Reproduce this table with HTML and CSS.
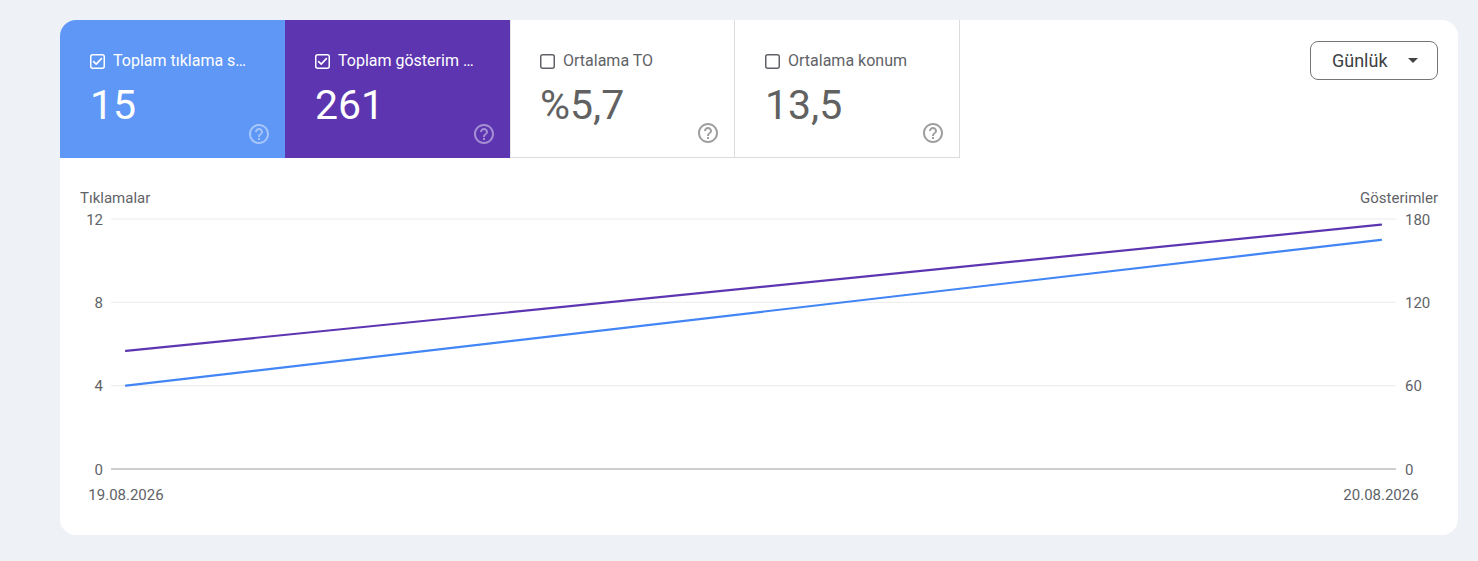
FILE: index.html
```html
<!DOCTYPE html>
<html lang="tr">
<head>
<meta charset="utf-8">
<title>Performans</title>
<link rel="stylesheet" href="styles.css">
</head>
<body>
<div class="page">
  <section class="card">
    <div class="top">
      <div class="tiles">
        <div class="tile tile-clicks">
          <div class="tile-head">
            <svg class="cb" viewBox="0 0 15 15"><rect x="0.75" y="0.75" width="13.5" height="13.5" rx="2"/><polyline points="3.6,7.6 6.2,10.1 11.4,4.6"/></svg>
            <span class="tile-title" title="Toplam tıklama sayısı">Toplam tıklama s…</span>
          </div>
          <div class="tile-value">15</div>
          <svg class="help" viewBox="0 0 24 24"><path d="M11 18h2v-2h-2v2zm1-16C6.48 2 2 6.48 2 12s4.48 10 10 10 10-4.48 10-10S17.52 2 12 2zm0 18c-4.41 0-8-3.59-8-8s3.59-8 8-8 8 3.59 8 8-3.59 8-8 8zm0-14c-2.21 0-4 1.79-4 4h2c0-1.1.9-2 2-2s2 .9 2 2c0 2-3 1.75-3 5h2c0-2.25 3-2.5 3-5 0-2.21-1.79-4-4-4z"/></svg>
        </div>
        <div class="tile tile-impr">
          <div class="tile-head">
            <svg class="cb" viewBox="0 0 15 15"><rect x="0.75" y="0.75" width="13.5" height="13.5" rx="2"/><polyline points="3.6,7.6 6.2,10.1 11.4,4.6"/></svg>
            <span class="tile-title" title="Toplam gösterim sayısı">Toplam gösterim …</span>
          </div>
          <div class="tile-value">261</div>
          <svg class="help" viewBox="0 0 24 24"><path d="M11 18h2v-2h-2v2zm1-16C6.48 2 2 6.48 2 12s4.48 10 10 10 10-4.48 10-10S17.52 2 12 2zm0 18c-4.41 0-8-3.59-8-8s3.59-8 8-8 8 3.59 8 8-3.59 8-8 8zm0-14c-2.21 0-4 1.79-4 4h2c0-1.1.9-2 2-2s2 .9 2 2c0 2-3 1.75-3 5h2c0-2.25 3-2.5 3-5 0-2.21-1.79-4-4-4z"/></svg>
        </div>
        <div class="tile tile-off tile-ctr">
          <div class="tile-head">
            <svg class="cb" viewBox="0 0 15 15"><rect x="0.75" y="0.75" width="13.5" height="13.5" rx="2"/></svg>
            <span class="tile-title">Ortalama TO</span>
          </div>
          <div class="tile-value">%5,7</div>
          <svg class="help" viewBox="0 0 24 24"><path d="M11 18h2v-2h-2v2zm1-16C6.48 2 2 6.48 2 12s4.48 10 10 10 10-4.48 10-10S17.52 2 12 2zm0 18c-4.41 0-8-3.59-8-8s3.59-8 8-8 8 3.59 8 8-3.59 8-8 8zm0-14c-2.21 0-4 1.79-4 4h2c0-1.1.9-2 2-2s2 .9 2 2c0 2-3 1.75-3 5h2c0-2.25 3-2.5 3-5 0-2.21-1.79-4-4-4z"/></svg>
        </div>
        <div class="tile tile-off tile-pos">
          <div class="tile-head">
            <svg class="cb" viewBox="0 0 15 15"><rect x="0.75" y="0.75" width="13.5" height="13.5" rx="2"/></svg>
            <span class="tile-title">Ortalama konum</span>
          </div>
          <div class="tile-value">13,5</div>
          <svg class="help" viewBox="0 0 24 24"><path d="M11 18h2v-2h-2v2zm1-16C6.48 2 2 6.48 2 12s4.48 10 10 10 10-4.48 10-10S17.52 2 12 2zm0 18c-4.41 0-8-3.59-8-8s3.59-8 8-8 8 3.59 8 8-3.59 8-8 8zm0-14c-2.21 0-4 1.79-4 4h2c0-1.1.9-2 2-2s2 .9 2 2c0 2-3 1.75-3 5h2c0-2.25 3-2.5 3-5 0-2.21-1.79-4-4-4z"/></svg>
        </div>
      </div>
      <div class="actions">
        <button class="select" type="button"><span>Günlük</span><span class="caret"></span></button>
      </div>
    </div>

    <div class="chart">
      <div class="axis-titles">
        <span>Tıklamalar</span>
        <span>Gösterimler</span>
      </div>
      <svg class="plot" width="1358" height="300" viewBox="0 0 1358 300">
        <g class="grid">
          <line x1="31" y1="12" x2="1316" y2="12"/>
          <line x1="31" y1="95.3" x2="1316" y2="95.3"/>
          <line x1="31" y1="178.7" x2="1316" y2="178.7"/>
        </g>
        <line class="base" x1="31" y1="262" x2="1316" y2="262"/>
        <g class="tick tick-left">
          <text x="23" y="17.5">12</text>
          <text x="23" y="100.8">8</text>
          <text x="23" y="184.2">4</text>
          <text x="23" y="267.5">0</text>
        </g>
        <g class="tick tick-right">
          <text x="1325" y="17.5">180</text>
          <text x="1325" y="100.8">120</text>
          <text x="1325" y="184.2">60</text>
          <text x="1325" y="267.5">0</text>
        </g>
        <g class="tick tick-date">
          <text x="46" y="293">19.08.2026</text>
          <text x="1301" y="293">20.08.2026</text>
        </g>
        <line class="series series-impr" x1="46" y1="143.9" x2="1301" y2="17.6"/>
        <line class="series series-clicks" x1="46" y1="178.7" x2="1301" y2="32.8"/>
      </svg>
    </div>
  </section>
</div>
</body>
</html>
```

FILE: styles.css
```css
* { box-sizing: border-box; }

body {
  margin: 0;
  background: #eef2f7;
  font-family: Roboto, "Noto Sans", "Liberation Sans", sans-serif;
}

.page {
  padding: 20px 20px 0 60px;
}

.card {
  width: 1398px;
  height: 515px;
  background: #ffffff;
  border-radius: 16px;
  overflow: hidden;
}

.top {
  display: flex;
  justify-content: space-between;
  align-items: flex-start;
}

.tiles {
  display: flex;
}

.tile {
  width: 225px;
  height: 138px;
  padding: 31px 14px 12px 30px;
  display: grid;
  grid-template-columns: 1fr 24px;
  grid-template-rows: auto 1fr;
  row-gap: 10px;
}

.tile-clicks { background: #5e97f6; color: #ffffff; }
.tile-impr { background: #5e35b1; color: #ffffff; }

.tile-off {
  background: #ffffff;
  color: #5f6368;
  border-right: 1px solid #dadce0;
  border-bottom: 1px solid #dadce0;
}
.tile-ctr { border-left: 1px solid #e3e5e8; padding-left: 29px; }

.tile-head {
  grid-column: 1 / 3;
  display: flex;
  align-items: center;
  gap: 8px;
  height: 20px;
  min-width: 0;
}

.cb {
  width: 15px;
  height: 15px;
  flex: none;
}
.cb rect {
  fill: none;
  stroke: #ffffff;
  stroke-width: 1.5;
}
.cb polyline {
  fill: none;
  stroke: #ffffff;
  stroke-width: 1.6;
  stroke-linecap: round;
  stroke-linejoin: round;
}
.tile-off .cb rect { stroke: #5f6368; }

.tile-title {
  font-size: 16px;
  line-height: 20px;
  white-space: nowrap;
}

.tile-value {
  grid-column: 1;
  grid-row: 2;
  align-self: start;
  font-size: 41px;
  line-height: 48px;
  font-weight: 400;
}
.tile-off .tile-value { color: #616161; }

.help {
  grid-column: 2;
  grid-row: 2;
  align-self: end;
  width: 24px;
  height: 24px;
  fill: rgba(255, 255, 255, 0.45);
}
.tile-off .help { fill: #9e9e9e; }

.actions {
  padding: 21px 20px 0 0;
}

.select {
  width: 128px;
  height: 39px;
  display: flex;
  align-items: center;
  justify-content: space-between;
  padding: 0 19px 0 21px;
  background: #ffffff;
  border: 1px solid #757575;
  border-radius: 8px;
  font-family: Roboto, "Noto Sans", sans-serif;
  font-size: 18px;
  font-weight: 400;
  color: #3c4043;
}

.caret {
  width: 0;
  height: 0;
  border-left: 5px solid transparent;
  border-right: 5px solid transparent;
  border-top: 5px solid #444444;
}

.chart {
  padding: 31px 20px 28px 20px;
}

.axis-titles {
  display: flex;
  justify-content: space-between;
  font-size: 15px;
  line-height: 18px;
  color: #5f6368;
}

.plot {
  display: block;
}

.grid line {
  stroke: #ebebeb;
  stroke-width: 1;
}
.base {
  stroke: #9e9e9e;
  stroke-width: 1;
}

.tick text {
  font-family: Roboto, "Noto Sans", sans-serif;
  font-size: 15px;
  fill: #5f6368;
}
.tick-left text { text-anchor: end; }
.tick-right text { text-anchor: start; }
.tick-date text { text-anchor: middle; }

.series {
  stroke-width: 2.2;
  stroke-linecap: round;
}
.series-impr { stroke: #5e35b1; }
.series-clicks { stroke: #4285f4; }
```
